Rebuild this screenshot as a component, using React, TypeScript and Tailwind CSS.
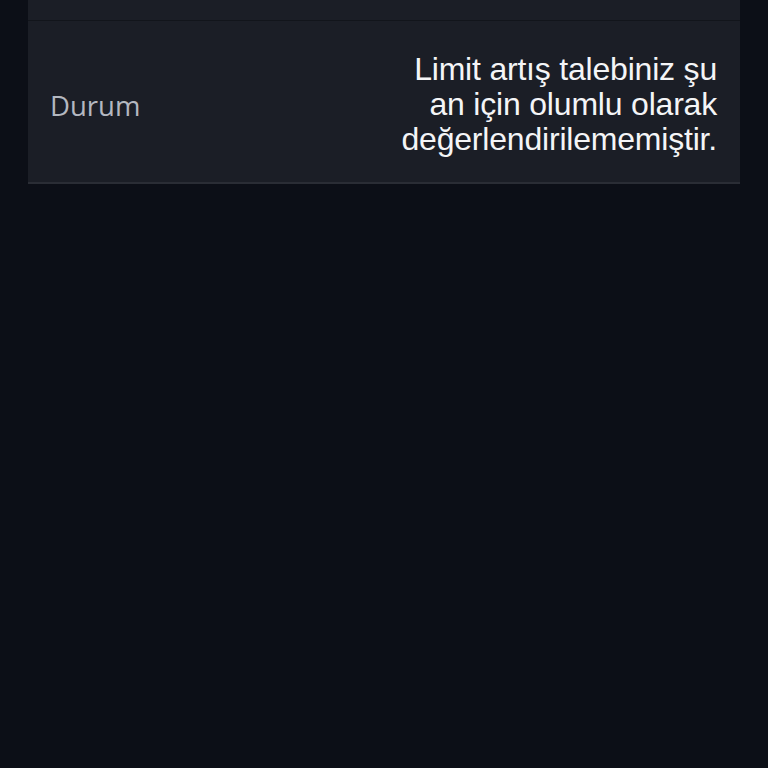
export default function App() {
  return (
    <div className="min-h-screen w-full bg-[#0c0f17] px-[28px]">
      <div className="bg-[#1b1e26] border-b-2 border-[#2a2d35]">
        <div className="h-[21px] border-b border-[#12151b]" />
        <div className="flex items-center justify-between pl-[22px] pr-[23px] pt-[31px] pb-[25px]">
          <span className="mt-[2px] text-[27.5px] text-[#b4b8c0]" style={{ fontFamily: '"Open Sans", sans-serif' }}>
            Durum
          </span>
          <p
            className="w-[330px] text-right text-[32px] leading-[35px] text-[#f4f5f7] tracking-[-0.2px]"
            style={{ fontFamily: '"Liberation Sans", Arial, sans-serif' }}
          >
            Limit artış talebiniz şu an için olumlu olarak değerlendirilememiştir.
          </p>
        </div>
      </div>
    </div>
  )
}
